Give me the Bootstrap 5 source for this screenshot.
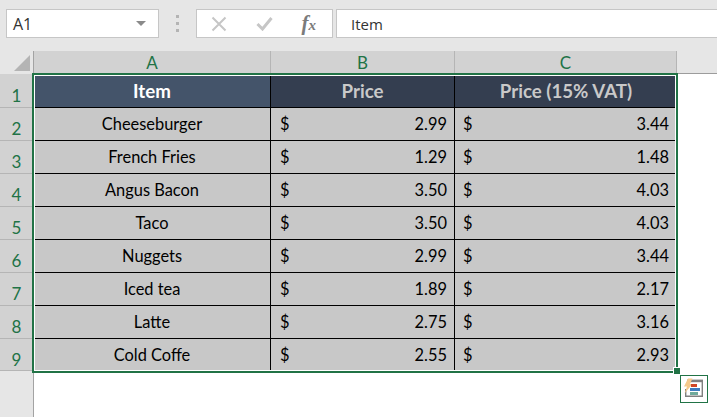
<!DOCTYPE html>
<html lang="en">
<head>
<meta charset="utf-8">
<title>Sheet</title>
<link href="https://cdn.jsdelivr.net/npm/bootstrap@5.3.0/dist/css/bootstrap.min.css" rel="stylesheet">
<style>
html,body{margin:0;height:417px;overflow:hidden;background:#fff}
body{font-family:Lato,"Liberation Sans",sans-serif;color:#000}
.xl-app{position:relative;width:717px;height:417px}
.xl-fbar{height:51px;background:#e6e6e6;padding:9px 0 13px 6px}
.xl-box{background:#fff;border:1px solid #c6c6c6;height:29px}
.xl-name{width:153px;padding:0 12px 0 6px;font:16px "Open Sans",sans-serif;color:#333}
.xl-caret{width:0;height:0;border-left:5px solid transparent;border-right:5px solid transparent;border-top:5px solid #8a8a8a}
.xl-dots{width:37px}
.xl-dots i{display:block;width:3px;height:3px;background:#b4b4b4}
.xl-tools{width:137px;padding:0 16px 0 14px}
.xl-formula{flex:1;margin-left:3px;border-right:0;padding-left:14px;font:15px "Open Sans",sans-serif;color:#333}
.xl-fx{font:italic 700 21px/1 "Liberation Serif",serif;color:#7b7b7b}
.xl-fx small{font-size:15px}
.xl-gutter{width:34px;background:#e6e6e6;border-right:1px solid #a3a3a3;height:366px}
.xl-corner{height:23px;background:#e6e6e6;border-right:1px solid #e6e6e6}
.xl-corner svg{display:block}
.xl-rhead{height:33px;background:#d2d2d2;border-bottom:1px solid #b5b5b5;color:#217346;font:17px "Lato",sans-serif;padding-top:10px}
.xl-rhead:nth-child(2){height:34px;padding-top:11px}
.xl-rhead:last-child{height:32px}
.xl-sheet{flex:1;min-width:0}
.xl-chead{height:23px;display:flex;background:#e6e6e6;border-bottom:1px solid #9c9c9c}
.xl-chead div{background:#d2d2d2;border-right:1px solid #b5b5b5;color:#217346;font-size:17px;line-height:24px;text-align:center;height:22px}
.xl-ca{width:237px}.xl-cb{width:184px}.xl-cc{width:222px}
.xl-grid{width:643px;border-collapse:separate;border-spacing:0;table-layout:fixed;font-size:16.4px}
.xl-grid td,.xl-grid th{height:33px;padding:1px 0 0;border-right:1px solid #000;border-bottom:1px solid #000;background:#c8c8c8;color:#000;font-weight:400;vertical-align:middle}
.xl-grid th{height:34px;font-weight:700;font-size:18.7px;text-align:center;background:#343e50;color:#c9c9c9}
.xl-grid th.xl-first{background:#44546a;color:#fff}
.xl-grid tr:last-child td{border-bottom:0;height:32px}
.xl-grid tr>*:last-child{border-right:0}
.xl-grid td.xl-money{padding:1px 7px 0 9px}
.xl-grid td.xl-money:last-child{padding:1px 8px 0 8px}
.xl-sel{position:absolute;left:32px;top:73px;width:646px;height:300px;border:2px solid #217346;box-shadow:inset 0 0 0 1px #fff;pointer-events:none}
.xl-handle{position:absolute;left:673px;top:367px;width:7px;height:7px;background:#217346;border:1px solid #fff;border-right:0;border-bottom:0}
.xl-quick{position:absolute;left:680px;top:375px;width:28px;height:28px;border:1px solid #217346;background:#fff}
</style>
</head>
<body>
<div class="xl-app">
  <div class="xl-fbar d-flex">
    <div class="xl-box xl-name d-flex align-items-center justify-content-between"><span>A1</span><span class="xl-caret"></span></div>
    <div class="xl-dots d-flex flex-column align-items-center justify-content-center gap-1"><i></i><i></i><i></i></div>
    <div class="xl-box xl-tools d-flex align-items-center justify-content-between">
      <svg width="16" height="16" viewBox="0 0 16 16"><path d="M1.5 1.5 14.5 14.5M14.5 1.5 1.5 14.5" stroke="#c6c6c6" stroke-width="2" fill="none"/></svg>
      <svg width="17" height="15" viewBox="0 0 17 15"><path d="M1.5 8 6.5 13 15.5 2" stroke="#c6c6c6" stroke-width="3" fill="none"/></svg>
      <span class="xl-fx">f<small>x</small></span>
    </div>
    <div class="xl-box xl-formula d-flex align-items-center">Item</div>
  </div>
  <div class="d-flex">
    <div class="xl-gutter flex-shrink-0">
      <div class="xl-corner"><svg width="33" height="23" viewBox="0 0 33 23"><path d="M14 20H30V4Z" fill="#b4b4b4"/></svg></div>
      <div class="xl-rhead text-center">1</div>
      <div class="xl-rhead text-center">2</div>
      <div class="xl-rhead text-center">3</div>
      <div class="xl-rhead text-center">4</div>
      <div class="xl-rhead text-center">5</div>
      <div class="xl-rhead text-center">6</div>
      <div class="xl-rhead text-center">7</div>
      <div class="xl-rhead text-center">8</div>
      <div class="xl-rhead text-center">9</div>
    </div>
    <div class="xl-sheet">
      <div class="xl-chead"><div class="xl-ca">A</div><div class="xl-cb">B</div><div class="xl-cc">C</div></div>
      <table class="xl-grid">
        <colgroup><col class="xl-ca"><col class="xl-cb"><col class="xl-cc"></colgroup>
        <tr><th class="xl-first">Item</th><th>Price</th><th>Price (15% VAT)</th></tr>
        <tr><td class="text-center">Cheeseburger</td><td class="xl-money"><div class="d-flex justify-content-between"><span>$</span><span>2.99</span></div></td><td class="xl-money"><div class="d-flex justify-content-between"><span>$</span><span>3.44</span></div></td></tr>
        <tr><td class="text-center">French Fries</td><td class="xl-money"><div class="d-flex justify-content-between"><span>$</span><span>1.29</span></div></td><td class="xl-money"><div class="d-flex justify-content-between"><span>$</span><span>1.48</span></div></td></tr>
        <tr><td class="text-center">Angus Bacon</td><td class="xl-money"><div class="d-flex justify-content-between"><span>$</span><span>3.50</span></div></td><td class="xl-money"><div class="d-flex justify-content-between"><span>$</span><span>4.03</span></div></td></tr>
        <tr><td class="text-center">Taco</td><td class="xl-money"><div class="d-flex justify-content-between"><span>$</span><span>3.50</span></div></td><td class="xl-money"><div class="d-flex justify-content-between"><span>$</span><span>4.03</span></div></td></tr>
        <tr><td class="text-center">Nuggets</td><td class="xl-money"><div class="d-flex justify-content-between"><span>$</span><span>2.99</span></div></td><td class="xl-money"><div class="d-flex justify-content-between"><span>$</span><span>3.44</span></div></td></tr>
        <tr><td class="text-center">Iced tea</td><td class="xl-money"><div class="d-flex justify-content-between"><span>$</span><span>1.89</span></div></td><td class="xl-money"><div class="d-flex justify-content-between"><span>$</span><span>2.17</span></div></td></tr>
        <tr><td class="text-center">Latte</td><td class="xl-money"><div class="d-flex justify-content-between"><span>$</span><span>2.75</span></div></td><td class="xl-money"><div class="d-flex justify-content-between"><span>$</span><span>3.16</span></div></td></tr>
        <tr><td class="text-center">Cold Coffe</td><td class="xl-money"><div class="d-flex justify-content-between"><span>$</span><span>2.55</span></div></td><td class="xl-money"><div class="d-flex justify-content-between"><span>$</span><span>2.93</span></div></td></tr>
      </table>
    </div>
  </div>
  <div class="xl-sel"></div>
  <div class="xl-handle"></div>
  <div class="xl-quick">
    <svg width="26" height="26" viewBox="0 0 26 26" class="d-block"><path d="M4.7 13V20.3H21.3V4.7H6" fill="none" stroke="#808080" stroke-width="1.4"/><path d="M6 3.6H22V6.2H6Z" fill="#808080"/><path d="M7 2.5H11.5L9 8H11.5L3.5 17.5 6 10.5H3Z" fill="#f5c98c"/><rect x="10" y="8" width="6" height="3" fill="#d24726"/><rect x="9" y="12" width="10" height="3" fill="#3f7cbf"/><rect x="9" y="16" width="8" height="3" fill="#6fa99b"/></svg>
  </div>
</div>
<script src="https://cdn.jsdelivr.net/npm/bootstrap@5.3.0/dist/js/bootstrap.bundle.min.js"></script>
</body>
</html>
